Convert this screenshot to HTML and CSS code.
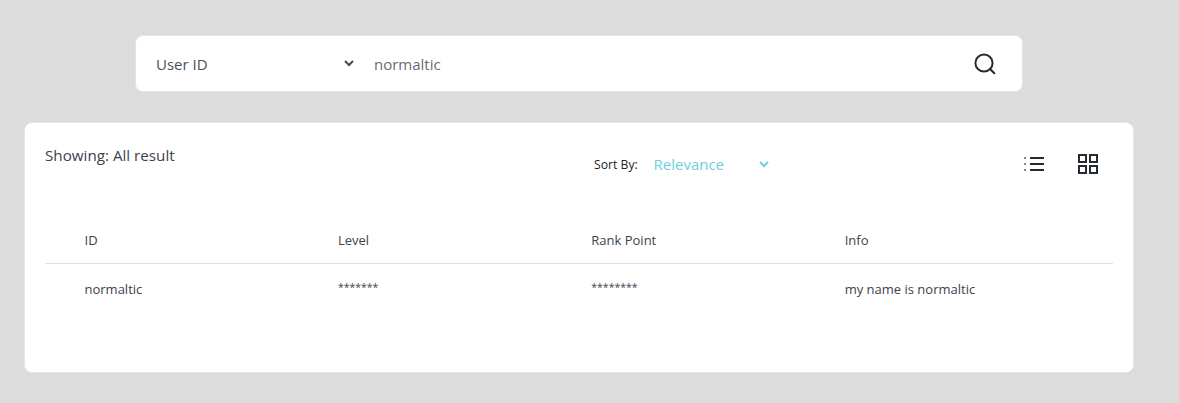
FILE: index.html
```html
<!DOCTYPE html>
<html lang="en">
<head>
<meta charset="utf-8">
<title>Search</title>
<link rel="stylesheet" href="styles.css">
</head>
<body>
<main class="page">
  <section class="search-bar">
    <div class="search-type">
      <span>User ID</span>
      <svg class="chev" width="10" height="7" viewBox="0 0 10 7"><path d="M1 1l4 4 4-4" fill="none" stroke="#444b55" stroke-width="2"/></svg>
    </div>
    <div class="search-text">normaltic</div>
    <svg class="search-icon" width="24" height="24" viewBox="0 0 24 24"><circle cx="11" cy="11" r="8.6" fill="none" stroke="#252a33" stroke-width="2"/><path d="M17.3 17.3l4 4" fill="none" stroke="#252a33" stroke-width="2" stroke-linecap="round"/></svg>
  </section>
  <section class="results">
    <div class="toolbar">
      <div class="showing">Showing: All result</div>
      <div class="sort">
        <span class="sort-label">Sort By:</span>
        <span class="sort-value">Relevance</span>
        <svg class="chev-teal" width="10" height="7" viewBox="0 0 10 7"><path d="M1 1l4 4 4-4" fill="none" stroke="#6fcfdc" stroke-width="2"/></svg>
      </div>
      <div class="views">
        <svg width="20" height="16" viewBox="0 0 20 16"><path d="M6 2h14M6 8h14M6 14h14" stroke="#252a33" stroke-width="2" fill="none"/><path d="M0 2h2M0 8h2M0 14h2" stroke="#888" stroke-width="2" fill="none"/></svg>
        <svg width="20" height="20" viewBox="0 0 20 20"><g fill="none" stroke="#252a33" stroke-width="2"><rect x="1" y="1" width="7" height="7"/><rect x="12" y="1" width="7" height="7"/><rect x="1" y="12" width="7" height="7"/><rect x="12" y="12" width="7" height="7"/></g></svg>
      </div>
    </div>
    <div class="table">
      <div class="row head"><span>ID</span><span>Level</span><span>Rank Point</span><span>Info</span></div>
      <div class="row body"><span>normaltic</span><span class="stars">*******</span><span class="stars">********</span><span>my name is normaltic</span></div>
    </div>
  </section>
</main>
</body>
</html>
```
FILE: styles.css
```css
* { box-sizing: border-box; }
html, body { margin: 0; height: 100%; }
body { background: #dcdcdc; font-family: "Open Sans", "Noto Sans", sans-serif; color: #343a44; overflow: hidden; }
.page { display: flex; flex-direction: column; padding: 35px 45px 0 24px; }
.search-bar { width: 888px; height: 57px; margin-left: 111px; background: #fff; border: 1px solid #e6e6ea; border-radius: 8px; display: flex; align-items: center; padding: 0 25px 0 20px; }
.search-type { width: 218px; display: flex; align-items: center; justify-content: space-between; font-size: 15px; color: #4a505a; padding-right: 20px; }
.search-text { flex: 1; font-size: 15px; color: #666c75; }
.results { margin-top: 30px; width: 1110px; height: 251px; background: #fff; border: 1px solid #e6e6ea; border-radius: 8px; padding: 0 20px; }
.toolbar { position: relative; height: 108px; }
.showing { padding-top: 22px; font-size: 15.2px; line-height: 20px; color: #3c424c; }
.sort { display: flex; align-items: center; position: absolute; left: 549px; top: 30px; height: 22px; }
.sort-label { font-size: 12.2px; color: #222; width: 60px; }
.sort-value { font-size: 15px; color: #6fcfdc; width: 105px; margin-left: -0.5px; }
.views { position: absolute; left: 979px; top: 31px; display: flex; align-items: center; gap: 34px; }
.row { display: grid; grid-template-columns: repeat(4, 253.4px); padding-left: 39.5px; font-size: 13px; color: #3c424c; }
.head { height: 33px; border-bottom: 1px solid #dfdfe4; }
.body { padding-top: 16px; }
.stars { font-size: 10.5px; line-height: 14px; }
```
